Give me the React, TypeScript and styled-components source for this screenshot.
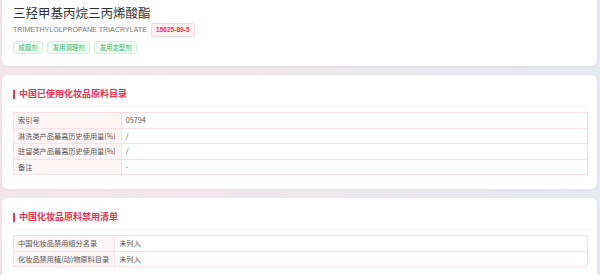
import styled, { createGlobalStyle } from "styled-components";

const GlobalStyle = createGlobalStyle`
  html, body {
    margin: 0;
    padding: 0;
    overflow: hidden;
  }
  body {
    font-family: "Liberation Sans", "Noto Sans CJK SC", sans-serif;
    color: #444;
  }
`;

const Page = styled.div`
  min-height: 100vh;
  background: linear-gradient(90deg, #f3e6ea 0%, #eee8ec 45%, #e5e9f0 100%);
  padding: 0 3px 20px 2px;
  display: flex;
  flex-direction: column;
  gap: 9px;
`;

const Card = styled.div<{ $top?: number }>`
  background: #fff;
  border-radius: 6px;
  box-shadow: 0 1px 3px rgba(120, 110, 130, 0.08);
  padding: 13px 9px 14px 11px;
  margin-top: ${(p) => p.$top ?? 0}px;
`;

const HeadCard = styled(Card)`
  padding: 11px 9px 12px 11px;
`;

const Title = styled.h1`
  margin: 0;
  font-size: 12.5px;
  line-height: 16px;
  font-weight: 400;
  color: #333;
  font-family: "Noto Sans CJK SC", sans-serif;
`;

const SubRow = styled.div`
  display: flex;
  align-items: center;
  gap: 4px;
  margin-top: 2px;
  height: 14px;
`;

const EnName = styled.span`
  font-size: 7.1px;
  color: #777;
`;

const Cas = styled.span`
  font-size: 6.6px;
  font-weight: 700;
  color: #e8384f;
  background: #fff2f4;
  border: 1px solid #fcd0d7;
  border-radius: 3px;
  padding: 0 4px;
  height: 12px;
  line-height: 12px;
`;

const TagRow = styled.div`
  display: flex;
  gap: 4px;
  margin-top: 4px;
`;

const Tag = styled.span`
  font-size: 6.4px;
  font-family: "Noto Sans CJK SC", sans-serif;
  color: #3cb96c;
  background: #f0fbf3;
  border: 1px solid #d2f0dc;
  border-radius: 3px;
  padding: 0 4.5px;
  height: 11px;
  line-height: 11px;
`;

const SectionHead = styled.h2`
  margin: 0;
  display: flex;
  align-items: center;
  gap: 4px;
  font-size: 9px;
  line-height: 12px;
  font-weight: 700;
  color: #e8334d;
  font-family: "Noto Sans CJK SC", sans-serif;
  padding-bottom: 6px;
  border-bottom: 1px solid #f4f1f2;
  &::before {
    content: "";
    width: 2px;
    height: 9px;
    background: #e8334d;
  }
`;

const Table = styled.table`
  margin-top: 5px;
  width: 100%;
  border-collapse: collapse;
  font-size: 7.2px;
  font-family: "Noto Sans CJK SC", sans-serif;
  color: #555;
  td {
    border: 1px solid #fadfe4;
    height: 14.5px;
    padding: 0 5px 0 4px;
    vertical-align: middle;
    white-space: nowrap;
  }
`;

const Label = styled.td`
  background: #fdf4f5;
  width: 1%;
`;

const Value = styled.td`
  background: #fff;
`;

const usedRows = [
  ["索引号", "05794"],
  ["淋洗类产品最高历史使用量(%)", "/"],
  ["驻留类产品最高历史使用量(%)", "/"],
  ["备注", "-"],
];

const bannedRows = [
  ["中国化妆品禁用组分名录", "未列入"],
  ["化妆品禁用植(动)物原料目录", "未列入"],
];

function InfoTable({ rows }: { rows: string[][] }) {
  return (
    <Table>
      <tbody>
        {rows.map(([k, v]) => (
          <tr key={k}>
            <Label>{k}</Label>
            <Value>{v}</Value>
          </tr>
        ))}
      </tbody>
    </Table>
  );
}

export default function App() {
  return (
    <>
      <GlobalStyle />
      <Page>
        <HeadCard $top={-6}>
          <Title>三羟甲基丙烷三丙烯酸酯</Title>
          <SubRow>
            <EnName>TRIMETHYLOLPROPANE TRIACRYLATE</EnName>
            <Cas>15625-89-5</Cas>
          </SubRow>
          <TagRow>
            <Tag>成膜剂</Tag>
            <Tag>发用调理剂</Tag>
            <Tag>发用定型剂</Tag>
          </TagRow>
        </HeadCard>
        <Card>
          <SectionHead>中国已使用化妆品原料目录</SectionHead>
          <InfoTable rows={usedRows} />
        </Card>
        <Card>
          <SectionHead>中国化妆品原料禁用清单</SectionHead>
          <InfoTable rows={bannedRows} />
        </Card>
      </Page>
    </>
  );
}
